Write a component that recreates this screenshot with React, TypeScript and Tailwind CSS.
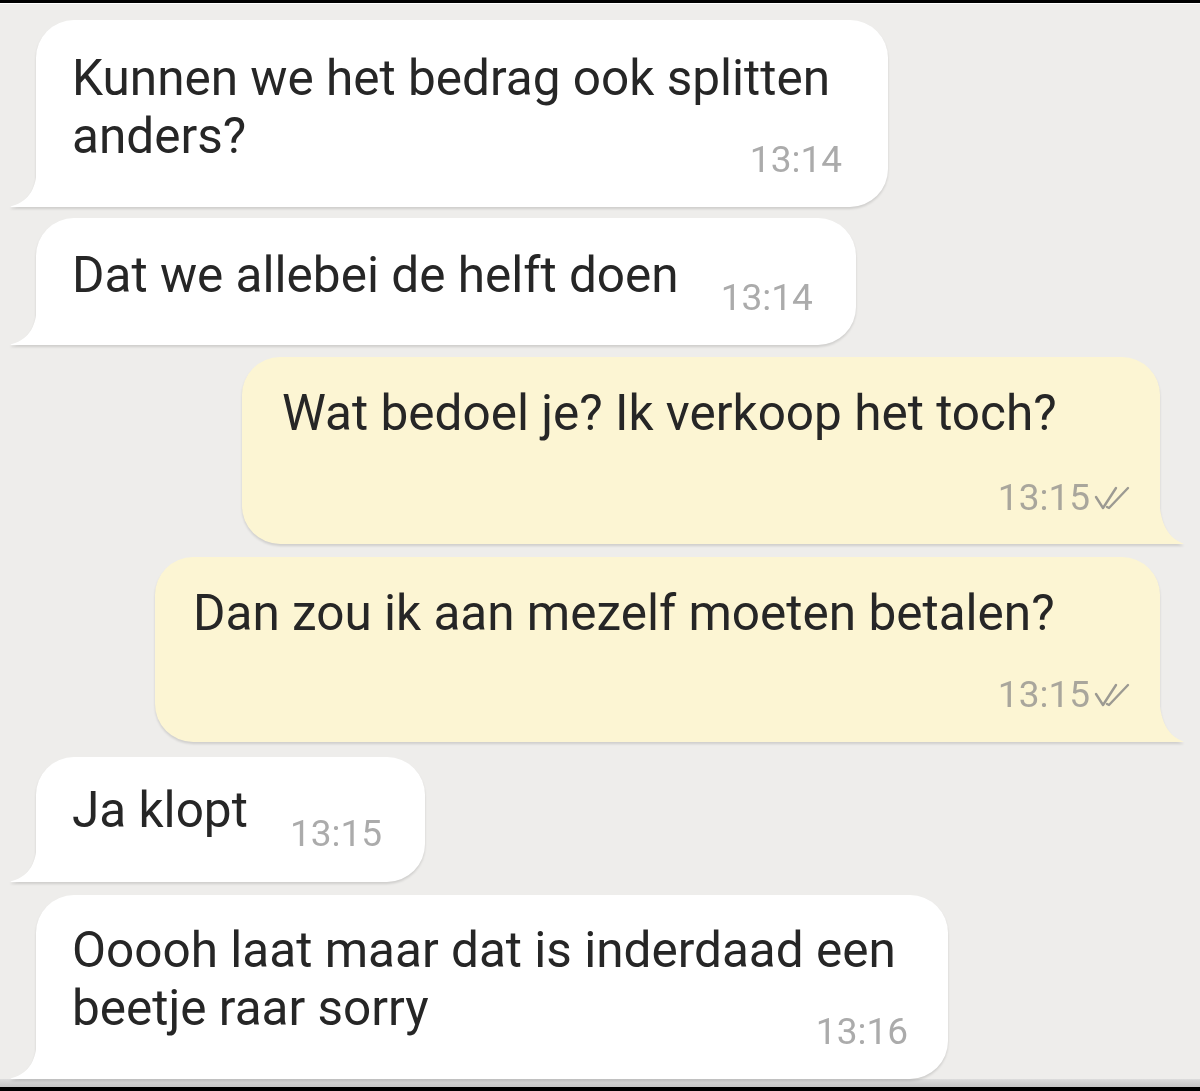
import React from "react";

type Msg = {
  id: number;
  side: "in" | "out";
  text: string;
  time: string;
  mt: string;
  layout: "inline" | "below";
};

const messages: Msg[] = [
  { id: 1, side: "in", text: "Kunnen we het bedrag ook splitten anders?", time: "13:14", mt: "mt-[16px]", layout: "below" },
  { id: 2, side: "in", text: "Dat we allebei de helft doen", time: "13:14", mt: "mt-[11px]", layout: "inline" },
  { id: 3, side: "out", text: "Wat bedoel je? Ik verkoop het toch?", time: "13:15", mt: "mt-[12px]", layout: "below" },
  { id: 4, side: "out", text: "Dan zou ik aan mezelf moeten betalen?", time: "13:15", mt: "mt-[13px]", layout: "below" },
  { id: 5, side: "in", text: "Ja klopt", time: "13:15", mt: "mt-[15px]", layout: "inline" },
  { id: 6, side: "in", text: "Ooooh laat maar dat is inderdaad een beetje raar sorry", time: "13:16", mt: "mt-[13px]", layout: "below" },
];

// per-bubble sizing, tuned against the screenshot
const sizes: Record<number, string> = {
  1: "w-[852px] pt-[29px] pb-[27px] pl-[36px] pr-[46px]",
  2: "pt-[28px] pb-[27px] pl-[36px] pr-[43px]",
  3: "w-[918px] pt-[27px] pb-[26px] pl-[40px] pr-[30px]",
  4: "w-[1005px] pt-[27px] pb-[27px] pl-[38px] pr-[30px]",
  5: "pt-[24px] pb-[28px] pl-[36px] pr-[43px]",
  6: "w-[912px] pt-[26px] pb-[27px] pl-[36px] pr-[40px]",
};

const timeOffsets: Record<number, string> = {
  1: "-mt-[25px]",
  2: "mt-[32px]",
  3: "mt-[36px]",
  4: "mt-[33px]",
  5: "mt-[33px]",
  6: "-mt-[25px]",
};

function Ticks() {
  return (
    <svg width="36" height="26" viewBox="0 0 36 26" className="ml-[4px]">
      <path d="M2 12 L9 23 L22 3" fill="none" stroke="#9c9a92" strokeWidth="2.4" strokeLinecap="round" strokeLinejoin="round" />
      <path d="M13 22 L15 23 L34 3" fill="none" stroke="#9c9a92" strokeWidth="2.4" strokeLinecap="round" strokeLinejoin="round" />
    </svg>
  );
}

function Bubble({ m }: { m: Msg }) {
  const isIn = m.side === "in";
  const bg = isIn ? "bg-white" : "bg-[#fcf5d3]";
  const timeColor = isIn ? "text-[#ababab]" : "text-[#a9a69c]";

  const time = (
    <div className={`flex items-center h-[40px] text-[37px] leading-[40px] ${timeColor} ${timeOffsets[m.id]}`}>
      <span>{m.time}</span>
      {!isIn && <Ticks />}
    </div>
  );

  return (
    <div className={`flex ${isIn ? "justify-start pl-[36px]" : "justify-end pr-[40px]"} ${m.mt}`}>
      <div className="relative drop-shadow-[0_2px_1px_rgba(0,0,0,0.13)]">
        <div
          className={`${bg} ${sizes[m.id]} ${
            isIn ? "rounded-[38px] rounded-bl-none" : "rounded-[38px] rounded-br-none"
          } text-[#262626] text-[49.5px] leading-[58px]`}
        >
          {m.layout === "inline" ? (
            <div className="flex items-start gap-[42px]">
              <div className="whitespace-nowrap">{m.text}</div>
              {time}
            </div>
          ) : (
            <div className="flex flex-col">
              <div>{m.text}</div>
              <div className="flex justify-end">{time}</div>
            </div>
          )}
        </div>
        {isIn ? (
          <svg width="27" height="42" viewBox="0 0 27 42" className="absolute left-[-26px] bottom-0">
            <path d="M27 0 C27 22 20 36 2 41 C0 41.6 0 42 2 42 L27 42 Z" fill="#ffffff" />
          </svg>
        ) : (
          <svg width="25" height="52" viewBox="0 0 25 52" className="absolute right-[-24px] bottom-0">
            <path d="M0 0 C0 26 6 44 23 51 C25 51.6 25 52 23 52 L0 52 Z" fill="#fcf5d3" />
          </svg>
        )}
      </div>
    </div>
  );
}

export default function App() {
  return (
    <div className="w-[1200px] h-[1091px] flex flex-col bg-[#eeedeb] overflow-hidden font-['Roboto',sans-serif]">
      <div className="h-[3px] bg-black" />
      <div className="h-px bg-white" />
      <div className="flex-1 flex flex-col">
        {messages.map((m) => (
          <Bubble key={m.id} m={m} />
        ))}
      </div>
      <div className="h-[10px] bg-gradient-to-b from-[#dcdcdc] to-[#c6c6c6]" />
      <div className="h-[4px] bg-black" />
    </div>
  );
}
